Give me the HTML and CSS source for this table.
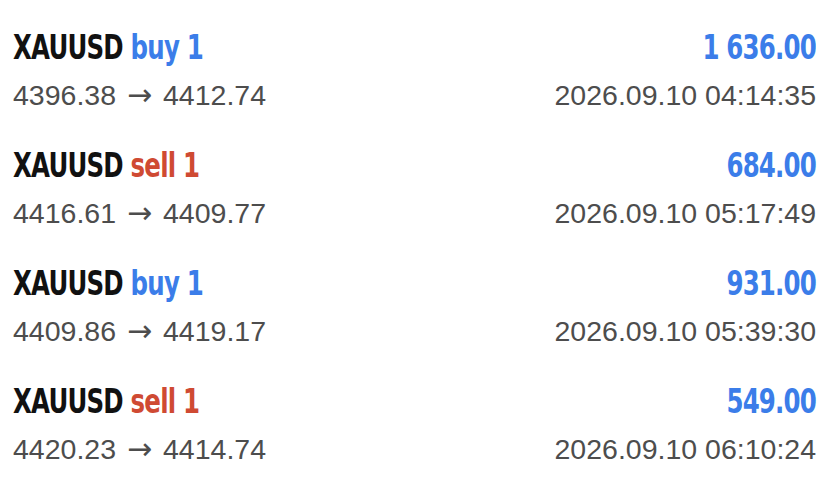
FILE: index.html
```html
<!DOCTYPE html>
<html lang="en">
<head>
    <meta charset="UTF-8">
    <meta name="viewport" content="width=device-width, initial-scale=1.0">
    <title>Closed Trades</title>
    <link rel="stylesheet" href="styles.css">
</head>
<body>
    <div class="trades">
        <div class="trade">
            <div class="row">
                <div class="title">XAUUSD <span class="buy">buy 1</span></div>
                <div class="profit">1 636.00</div>
            </div>
            <div class="row">
                <div class="prices">4396.38 <span class="arrow">→</span> 4412.74</div>
                <div class="time">2026.09.10 04:14:35</div>
            </div>
        </div>

        <div class="trade">
            <div class="row">
                <div class="title">XAUUSD <span class="sell">sell 1</span></div>
                <div class="profit">684.00</div>
            </div>
            <div class="row">
                <div class="prices">4416.61 <span class="arrow">→</span> 4409.77</div>
                <div class="time">2026.09.10 05:17:49</div>
            </div>
        </div>

        <div class="trade">
            <div class="row">
                <div class="title">XAUUSD <span class="buy">buy 1</span></div>
                <div class="profit">931.00</div>
            </div>
            <div class="row">
                <div class="prices">4409.86 <span class="arrow">→</span> 4419.17</div>
                <div class="time">2026.09.10 05:39:30</div>
            </div>
        </div>

        <div class="trade">
            <div class="row">
                <div class="title">XAUUSD <span class="sell">sell 1</span></div>
                <div class="profit">549.00</div>
            </div>
            <div class="row">
                <div class="prices">4420.23 <span class="arrow">→</span> 4414.74</div>
                <div class="time">2026.09.10 06:10:24</div>
            </div>
        </div>
    </div>
</body>
</html>
```

FILE: styles.css
```css
body {
    margin: 0;
    padding: 0;
    background-color: #fff;
    font-family: "Liberation Sans", Arial, sans-serif;
}

.trades {
    padding: 23px 14px 0 13px;
}

.trade {
    height: 118px;
}

.row {
    display: flex;
    justify-content: space-between;
    align-items: baseline;
}

/* narrow the bold heading font to look condensed */
.title,
.profit {
    display: inline-block;
    font-family: "DejaVu Sans Condensed", "DejaVu Sans", sans-serif;
    font-weight: bold;
    font-size: 34px;
    line-height: 48px;
    letter-spacing: -1px;
    transform: scaleX(0.8);
}

.title {
    color: #111;
    transform-origin: left center;
}

.profit {
    transform-origin: right center;
}

.buy,
.profit {
    color: #3b7de9;
}

.sell {
    color: #cf4a33;
}

.prices,
.time {
    font-size: 28.5px;
    line-height: 48px;
    color: #4d4d4d;
}

.arrow {
    font-family: "DejaVu Sans", sans-serif;
    font-size: 30px;
    margin: 0 3px;
}
```
